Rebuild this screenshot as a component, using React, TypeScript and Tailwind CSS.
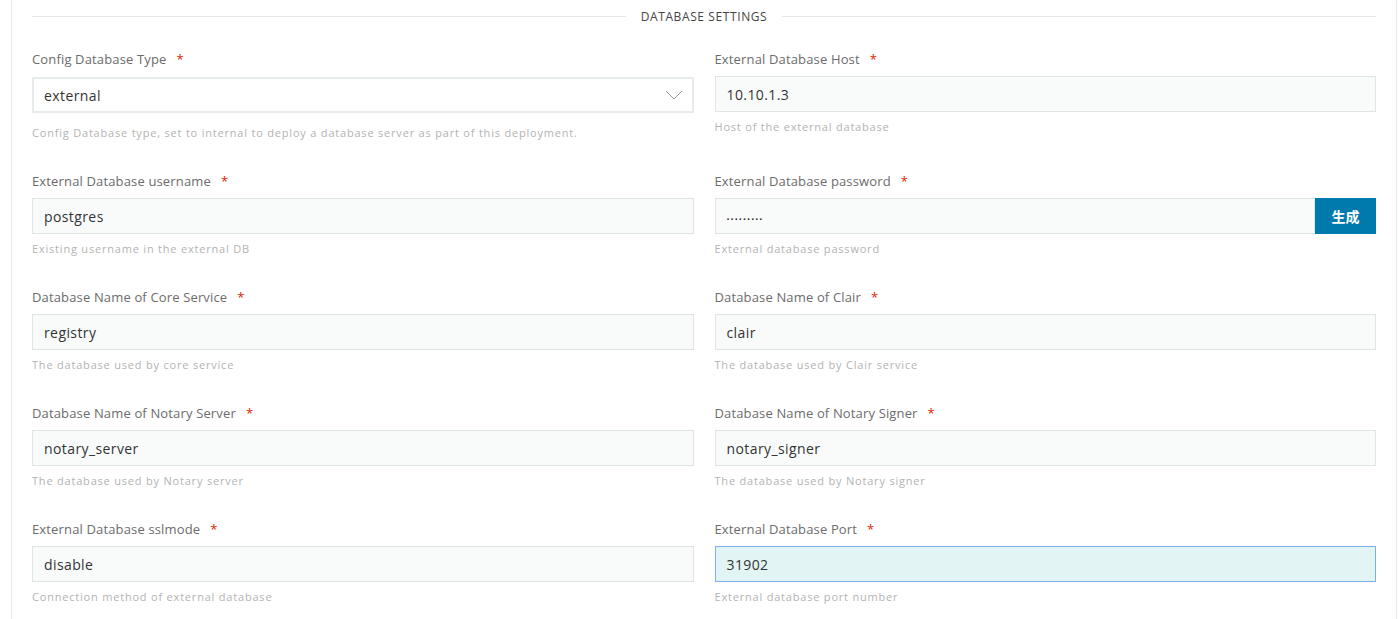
type Field = {
  label: string;
  value: string;
  help: string;
  kind?: "select" | "password" | "focus";
};

const rows: [Field, Field][] = [
  [
    {
      label: "Config Database Type",
      value: "external",
      help: "Config Database type, set to internal to deploy a database server as part of this deployment.",
      kind: "select",
    },
    { label: "External Database Host", value: "10.10.1.3", help: "Host of the external database" },
  ],
  [
    { label: "External Database username", value: "postgres", help: "Existing username in the external DB" },
    { label: "External Database password", value: "•••••••••", help: "External database password", kind: "password" },
  ],
  [
    { label: "Database Name of Core Service", value: "registry", help: "The database used by core service" },
    { label: "Database Name of Clair", value: "clair", help: "The database used by Clair service" },
  ],
  [
    { label: "Database Name of Notary Server", value: "notary_server", help: "The database used by Notary server" },
    { label: "Database Name of Notary Signer", value: "notary_signer", help: "The database used by Notary signer" },
  ],
  [
    { label: "External Database sslmode", value: "disable", help: "Connection method of external database" },
    { label: "External Database Port", value: "31902", help: "External database port number", kind: "focus" },
  ],
];

function FieldBox({ f }: { f: Field }) {
  return (
    <div className="flex flex-col">
      <div className="flex h-[20px] items-center text-[13px] tracking-[0.15px] text-[#6c6c6c]">
        <span>{f.label}</span>
        <span className="ml-[10px] text-[#e12200]">*</span>
      </div>
      {f.kind === "select" ? (
        <div className="mt-[7px] flex h-[36px] items-center justify-between border-2 border-[#e6ebeb] bg-white pl-[10px] pr-[9px] text-[14px] tracking-[0.4px] text-[#333]">
          <span>{f.value}</span>
          <svg width="18" height="10" viewBox="0 0 18 10" fill="none">
            <polyline points="1,1 9,9 17,1" stroke="#9a9a9a" strokeWidth="1" />
          </svg>
        </div>
      ) : f.kind === "password" ? (
        <div className="mt-[6px] flex h-[36px]">
          <div className="flex flex-1 items-center border border-[#dfe5e5] bg-[#f9fbfb] px-[11px] pt-[5px] text-[8px] tracking-[1.1px] text-[#333]">
            {f.value}
          </div>
          <button className="w-[61px] bg-[#0079ad] text-[14px] font-semibold text-white">生成</button>
        </div>
      ) : (
        <div
          className={
            f.kind === "focus"
              ? "mt-[6px] flex h-[36px] items-center border border-[#7ab1ea] bg-[#e3f4f5] px-[11px] text-[14px] tracking-[0.4px] text-[#333]"
              : "mt-[6px] flex h-[36px] items-center border border-[#dfe5e5] bg-[#f9fbfb] px-[11px] text-[14px] tracking-[0.4px] text-[#333]"
          }
        >
          {f.value}
        </div>
      )}
      <div
        className={
          f.kind === "select"
            ? "mt-[13px] h-[14px] text-[11px] leading-[14px] tracking-[0.8px] text-[#b3b3b3]"
            : "mt-[8px] h-[14px] text-[11px] leading-[14px] tracking-[0.8px] text-[#b3b3b3]"
        }
      >
        {f.help}
      </div>
    </div>
  );
}

export default function App() {
  return (
    <div
      className="h-[619px] w-[1398px] overflow-hidden bg-white"
      style={{ fontFamily: "'Open Sans', 'Noto Sans CJK SC', sans-serif" }}
    >
      <div className="ml-[11px] mr-[1px] h-full border-x border-[#e8e8e8] px-[20px]">
        <div className="flex h-[33px] items-center gap-[15px]">
          <div className="h-px flex-1 bg-[#e4e9e9]" />
          <span className="text-[12px] tracking-[0.6px] text-[#454545]">DATABASE SETTINGS</span>
          <div className="h-px flex-1 bg-[#e4e9e9]" />
        </div>
        <div className="mt-[17px] grid grid-cols-2 items-start gap-x-[21px] gap-y-[32px]">
          {rows.map(([a, b]) => (
            <>
              <FieldBox key={a.label} f={a} />
              <FieldBox key={b.label} f={b} />
            </>
          ))}
        </div>
      </div>
    </div>
  );
}
